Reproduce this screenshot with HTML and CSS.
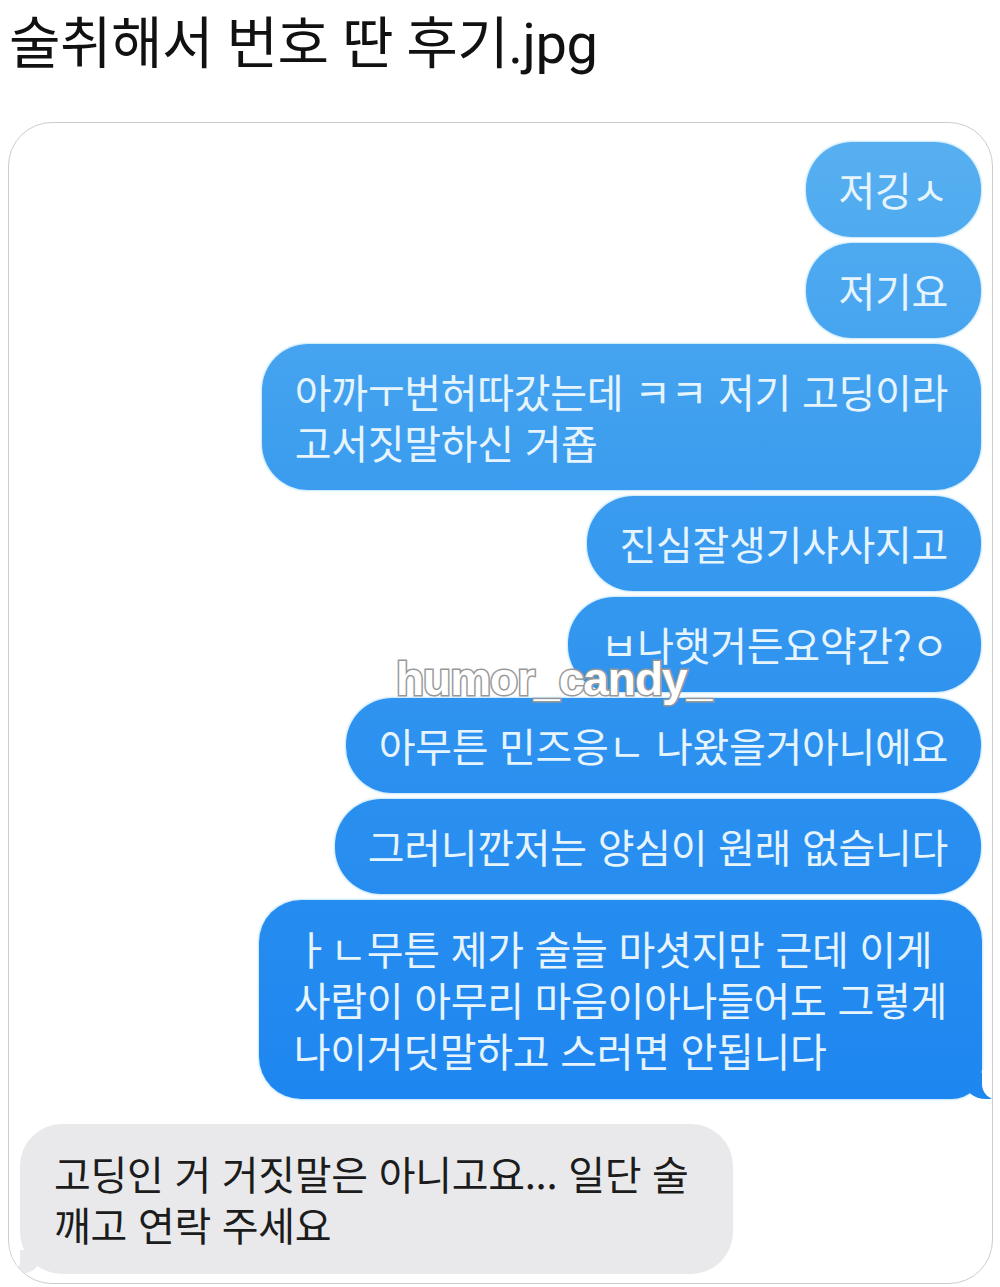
FILE: index.html
```html
<!DOCTYPE html>
<html lang="ko">
<head>
<meta charset="utf-8">
<title>술취해서 번호 딴 후기.jpg</title>
<link rel="stylesheet" href="styles.css">
</head>
<body>
<h1 class="title">술취해서 번호 딴 후기.jpg</h1>
<div class="frame">
  <div class="chat">
    <div class="bubble me">저깅ㅅ</div>
    <div class="bubble me">저기요</div>
    <div class="bubble me">아까ㅜ번허따갔는데 ㅋㅋ 저기 고딩이라<br>고서짓말하신 거죱</div>
    <div class="bubble me">진심잘생기샤사지고</div>
    <div class="bubble me">ㅂ나햇거든요약간?ㅇ</div>
    <div class="bubble me">아무튼 민즈응ㄴ 나왔을거아니에요</div>
    <div class="bubble me">그러니깐저는 양심이 원래 없습니다</div>
    <div class="bubble me tail">ㅏㄴ무튼 제가 술늘 마셧지만 근데 이게<br>사람이 아무리 마음이아나들어도 그렇게<br>나이거딧말하고 스러면 안됩니다</div>
    <div class="bubble them">고딩인 거 거짓말은 아니고요... 일단 술<br>깨고 연락 주세요</div>
  </div>
  <div class="watermark">humor_candy_</div>
</div>
</body>
</html>
```
FILE: styles.css
```css
html, body {
  margin: 0;
  padding: 0;
  background: #ffffff;
}

.title {
  margin: 0;
  padding: 13px 0 0 9px;
  font-family: Roboto, "Noto Sans CJK KR", sans-serif;
  font-weight: 400;
  font-size: 56px;
  line-height: 63px;
  color: #111111;
  letter-spacing: -0.5px;
}

.frame {
  position: relative;
  box-sizing: border-box;
  margin: 46px 7px 0 8px;
  height: 1162px;
  border: 1.5px solid #cccccc;
  border-radius: 44px;
  padding: 19px 10px 0 11px;
  overflow: hidden;
  background: #ffffff;
}

.chat {
  display: flex;
  flex-direction: column;
  align-items: flex-end;
  gap: 6px;
}

.bubble {
  position: relative;
  font-family: "Noto Sans CJK KR", sans-serif;
  font-size: 40px;
  line-height: 51px;
  letter-spacing: -0.3px;
  white-space: nowrap;
  padding: 22px 33px;
  border-radius: 46px;
}

.me {
  color: #e6f4fd;
  background: linear-gradient(180deg, #58b0f0 0px, #56aff0 150px, #3d9eef 450px, #2c91ef 750px, #1e86f0 1100px) fixed;
  box-shadow: 0 0 2px 1px #c4e6fb;
  margin-right: 1px;
}

.tail {
  padding: 23px 35px 23px 35px;
  border-radius: 42px 40px 30px 42px;
  margin-right: 0;
}

.tail::before {
  content: "";
  position: absolute;
  bottom: 0;
  right: -10px;
  width: 28px;
  height: 26px;
  background: inherit;
  border-bottom-left-radius: 22px 18px;
}

.tail::after {
  content: "";
  position: absolute;
  bottom: -1px;
  right: -24px;
  width: 24px;
  height: 30px;
  background: #ffffff;
  border-bottom-left-radius: 16px;
}

.them {
  align-self: flex-start;
  margin-top: 19px;
  color: #1c1c1c;
  background: #e9e9eb;
  padding: 24px 44px 24px 34px;
  border-radius: 42px;
}

.them::before {
  content: "";
  position: absolute;
  bottom: 0;
  left: -6px;
  width: 26px;
  height: 24px;
  background: #e9e9eb;
  border-bottom-right-radius: 20px 16px;
}

.them::after {
  content: "";
  position: absolute;
  bottom: -1px;
  left: -20px;
  width: 20px;
  height: 28px;
  background: #ffffff;
  border-bottom-right-radius: 14px;
}

.watermark {
  position: absolute;
  top: 534px;
  left: 387px;
  font-family: "Liberation Sans", Arial, sans-serif;
  font-weight: 700;
  font-size: 46px;
  line-height: 44px;
  letter-spacing: -1px;
  color: #ffffff;
  -webkit-text-stroke: 3px #9c9c9c;
  paint-order: stroke fill;
  text-shadow: 0 0 2px rgba(120, 120, 120, 0.5);
}
```
